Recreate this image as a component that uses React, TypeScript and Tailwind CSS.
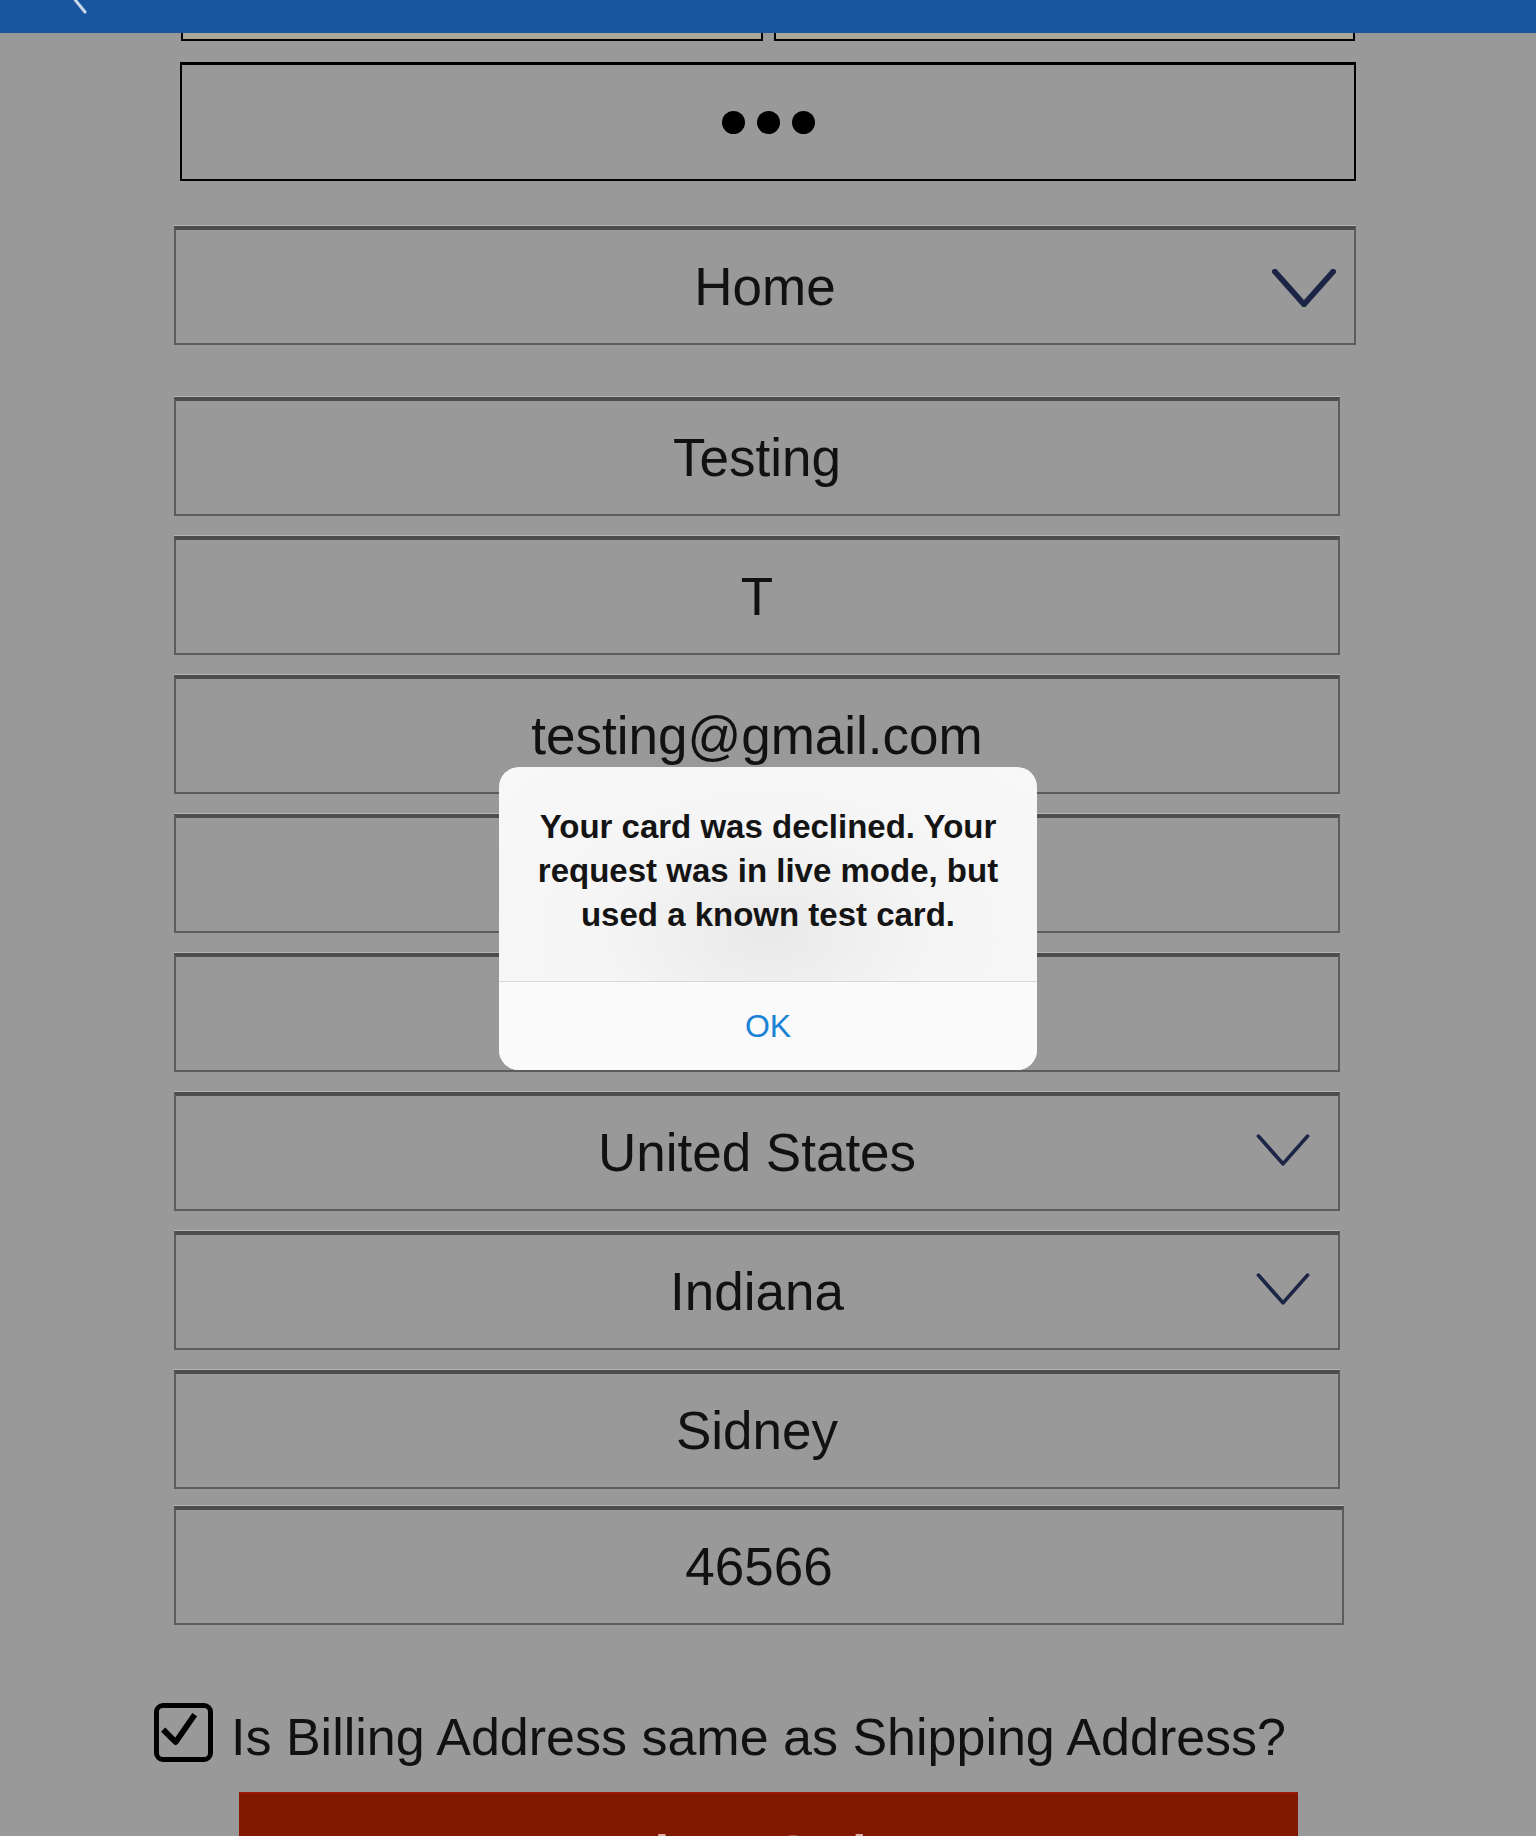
import React from 'react';

// 주소 입력 폼 위에 카드 거절 알림이 떠 있는 화면
const fields = ['Testing', 'T', 'testing@gmail.com', '', '', 'United States', 'Indiana', 'Sidney', '46566'];
const selects = ['United States', 'Indiana'];

function Chevron({ className, strokeWidth = 4 }: { className?: string; strokeWidth?: number }) {
  return (
    <svg viewBox="0 0 50 30" className={className} fill="none">
      <path
        d="M2 2 L25 28 L48 2"
        stroke="#1c2546"
        strokeWidth={strokeWidth}
        strokeLinecap="round"
        strokeLinejoin="round"
      />
    </svg>
  );
}

function Field({ value, last }: { value: string; last?: boolean }) {
  const isSelect = selects.includes(value);
  return (
    <div
      className={
        'relative flex h-[119px] items-center justify-center border-2 border-t-4 border-[#5c5c5c] border-t-[#4d4d4d] shadow-[0_-1px_0_#b6b6b6] ' +
        (last ? '-mt-[3px] w-[1170px]' : 'w-[1166px]')
      }
    >
      <span className="text-[53px] leading-none text-[#111]">{value}</span>
      {isSelect && <Chevron className="absolute right-[28px] top-[38px] h-[32px] w-[54px]" strokeWidth={3.5} />}
    </div>
  );
}

export default function App() {
  return (
    <div className="relative h-[1836px] w-[1536px] overflow-hidden bg-[#999999] font-['Liberation_Sans',Arial,sans-serif]">
      {/* 상단 파란 바 */}
      <div className="relative h-[33px] bg-[#1a56a0]">
        <svg className="absolute left-[68px] top-0 h-[16px] w-[22px]" viewBox="0 0 22 16" fill="none">
          <path d="M4 -4 L17 12" stroke="#c9d8ec" strokeWidth="3" strokeLinecap="round" />
        </svg>
      </div>

      {/* 잘린 상단 입력칸 */}
      <div className="ml-[181px] flex w-[1174px] gap-[11px]">
        <div className="h-[8px] flex-1 border-x-2 border-b-2 border-black bg-[#aaa79b]" />
        <div className="h-[8px] flex-1 border-x-2 border-b-2 border-black bg-[#aaa79b]" />
      </div>

      {/* 비밀번호 */}
      <div className="ml-[180px] mt-[21px] flex h-[119px] w-[1176px] items-center justify-center gap-[12px] border-2 border-t-[3px] border-black">
        <span className="h-[23px] w-[23px] rounded-full bg-black" />
        <span className="h-[23px] w-[23px] rounded-full bg-black" />
        <span className="h-[23px] w-[23px] rounded-full bg-black" />
      </div>

      {/* 주소 유형 */}
      <div className="relative ml-[174px] mt-[45px] flex h-[119px] w-[1182px] items-center justify-center border-2 border-t-4 border-[#5c5c5c] border-t-[#4d4d4d] shadow-[0_-1px_0_#b6b6b6]">
        <span className="text-[53px] leading-none text-[#111]">Home</span>
        <Chevron className="absolute right-[14px] top-[39px] h-[38px] w-[72px]" strokeWidth={4.5} />
      </div>

      <div className="ml-[174px] mt-[52px] flex flex-col gap-[20px]">
        {fields.map((f, i) => (
          <Field key={i} value={f} last={i === fields.length - 1} />
        ))}
      </div>

      {/* 청구지 동일 체크 */}
      <div className="ml-[154px] mt-[77px] flex h-[60px] items-center gap-[18px]">
        <div className="flex h-[59px] w-[59px] shrink-0 items-center justify-center rounded-[9px] border-[5px] border-black">
          <svg viewBox="0 0 59 59" className="h-[59px] w-[59px]" fill="none">
            <path d="M5 26 L20 41 L43 8" stroke="#000" strokeWidth="7" strokeLinejoin="round" />
          </svg>
        </div>
        <span className="whitespace-nowrap pt-[10px] text-[52px] leading-none text-[#111]">
          Is Billing Address same as Shipping Address?
        </span>
      </div>

      {/* 주문 버튼 */}
      <div className="mx-auto mt-[30px] flex h-[120px] w-[1059px] justify-center border-t-2 border-t-[#9a1a0a] bg-[#821800] pt-[34px]">
        <span className="text-[53px] font-bold leading-none text-[#dfaea6]">Place Order</span>
      </div>

      {/* 알림 */}
      <div className="absolute left-[499px] top-[767px] w-[538px] overflow-hidden rounded-[20px] bg-[radial-gradient(ellipse_at_50%_55%,#e9e9e9_0%,#f5f5f5_45%,#f8f8f8_100%)]">
        <p className="px-[24px] pb-[44px] pt-[38px] text-center text-[33px] font-bold leading-[44px] text-[#141414]">
          Your card was declined. Your request was in live mode, but used a known test card.
        </p>
        <div className="flex h-[89px] items-center justify-center border-t border-[#d8d8d8] bg-[#fafafa]">
          <span className="text-[32px] leading-none text-[#1b83d6]">OK</span>
        </div>
      </div>
    </div>
  );
}
